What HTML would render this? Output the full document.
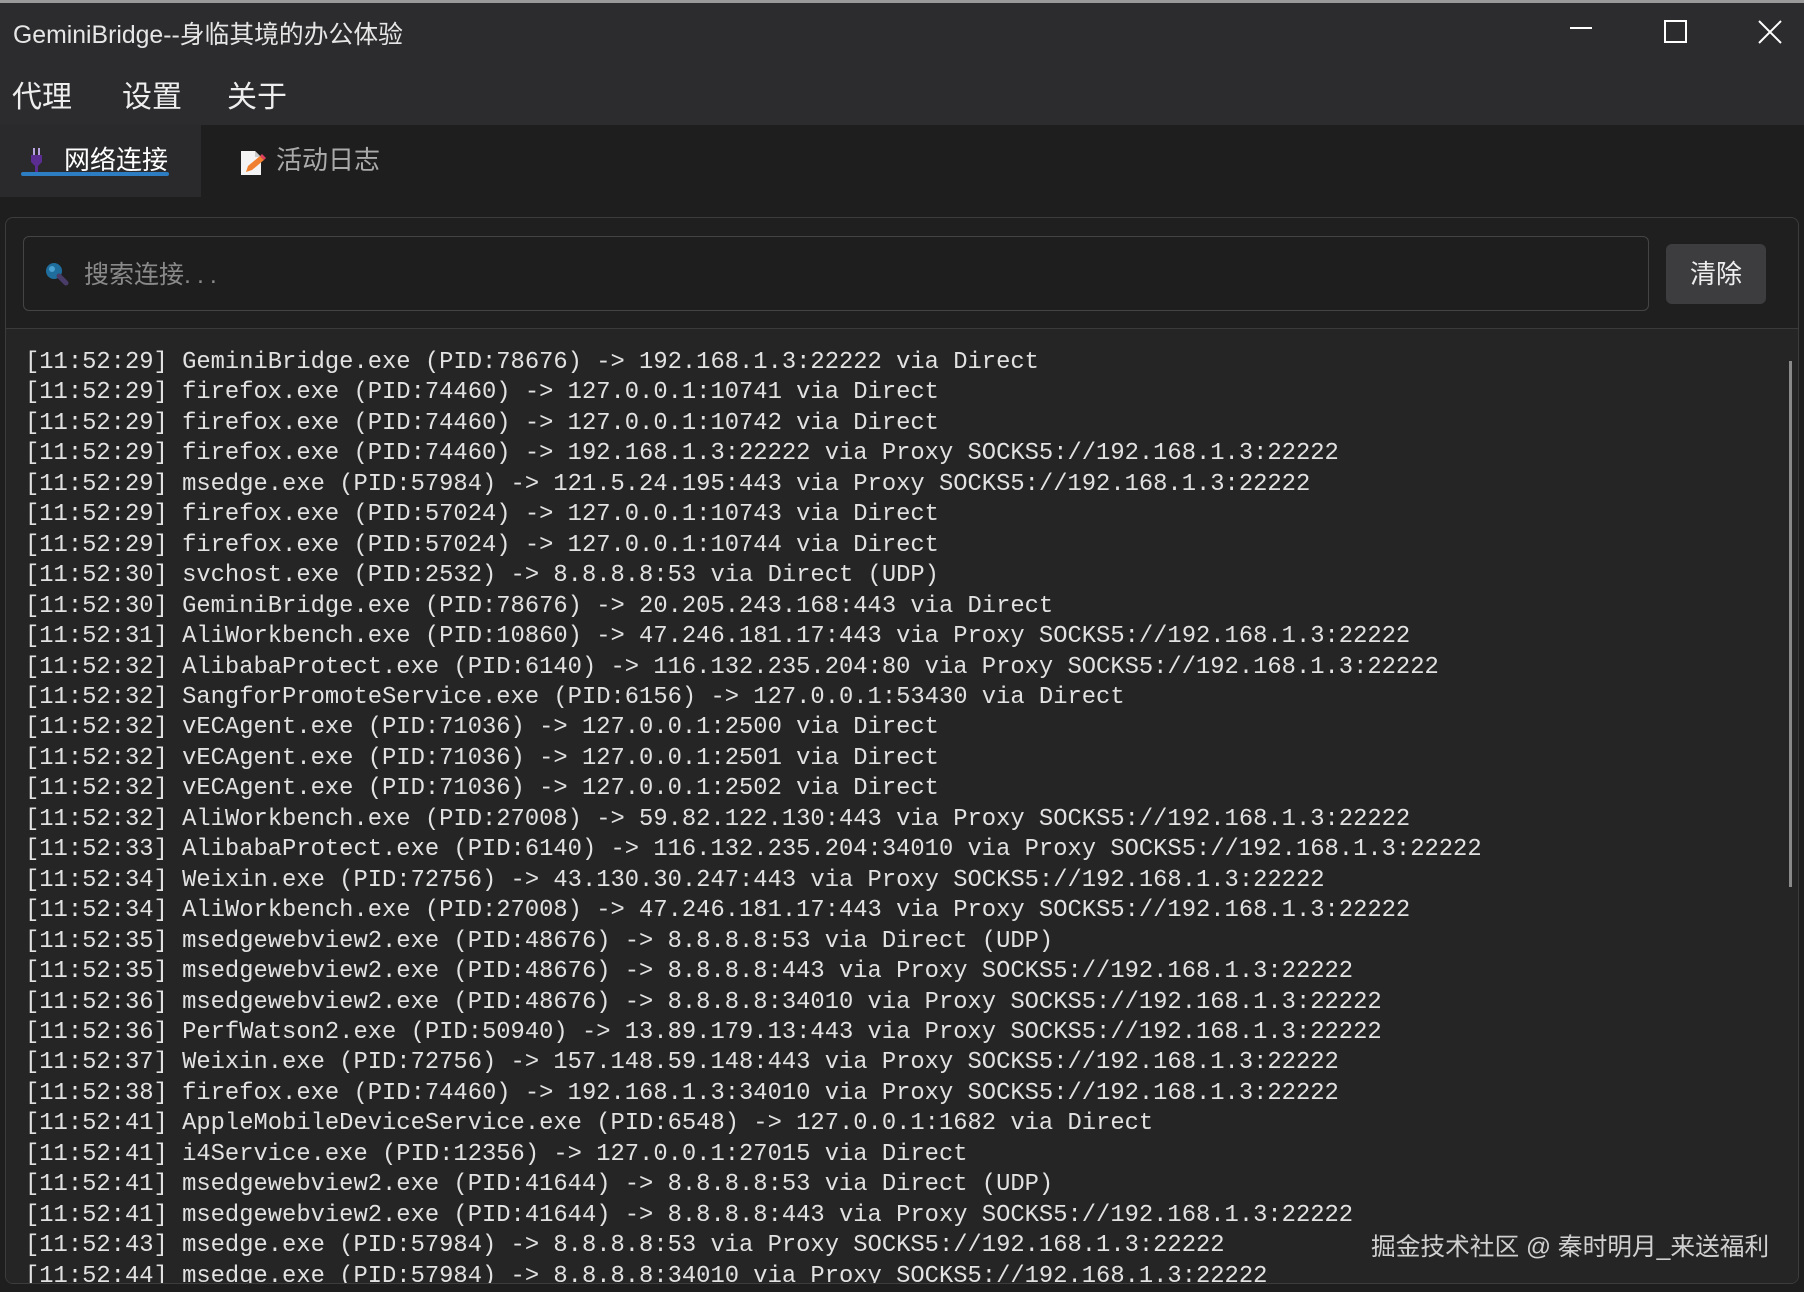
<!DOCTYPE html>
<html><head><meta charset="utf-8"><style>
*{margin:0;padding:0;box-sizing:border-box}
body{width:1804px;height:1292px;background:#1e1e1e;position:relative;overflow:hidden;font-family:"Liberation Sans","Noto Sans CJK SC",sans-serif;color:#e8e8e8}
.top{position:absolute;left:0;top:0;width:1804px;height:125px;background:#2c2c2e;border-top:3px solid #9a9a9a}
.title{position:absolute;left:13px;top:12px;font-size:24.8px;color:#e6e6e6}
.menu{position:absolute;top:69px;font-size:30px;color:#eee}
.tab1{position:absolute;left:0;top:125px;width:201px;height:72px;background:#2a2a2c}
.tabt{position:absolute;top:140px;font-size:26px}
.ul{position:absolute;left:21px;top:172px;width:148px;height:4px;background:#2d7dc2;border-radius:2px}
.panel{position:absolute;left:5px;top:217px;width:1794px;height:1067px;border:1.5px solid #3c3c3c;border-radius:8px;background:#1f1f1f;overflow:hidden}
.search{position:absolute;left:17px;top:18px;width:1626px;height:75px;border:1.5px solid #444;border-radius:6px;background:#1e1e1e}
.btn{position:absolute;left:1660px;top:26px;width:100px;height:60px;background:#3d3d40;border-radius:6px;font-size:26px;text-align:center;line-height:60px;color:#eee}
.log{position:absolute;left:0;top:110px;width:1794px;height:960px;background:#252525;border-top:1.5px solid #3a3a3a}
pre{position:absolute;left:19px;top:19px;font-family:"Liberation Mono",monospace;font-size:23.8px;line-height:30.45px;color:#e2e2e2}
.sb{position:absolute;left:1783px;top:32px;width:3px;height:526px;background:#8a8a8a}
.wm{position:absolute;left:1371px;top:1227px;font-size:24.7px;color:#d0d0d0}
</style></head><body>
<div class="top">
<div class="title">GeminiBridge--身临其境的办公体验</div>
<svg style="position:absolute;left:1570px;top:24px" width="22" height="4"><rect width="22" height="2" fill="#fff"/></svg>
<svg style="position:absolute;left:1664px;top:17px" width="24" height="24"><rect x="1" y="1" width="21" height="21" fill="none" stroke="#fff" stroke-width="2"/></svg>
<svg style="position:absolute;left:1758px;top:17px" width="24" height="24"><path d="M1 1L23 23M23 1L1 23" stroke="#fff" stroke-width="2"/></svg>
<div class="menu" style="left:12px">代理</div>
<div class="menu" style="left:122px">设置</div>
<div class="menu" style="left:227px">关于</div>
</div>
<div class="tab1"></div>
<svg style="position:absolute;left:31px;top:148px" width="12" height="26"><rect x="2" y="0" width="2" height="7" fill="#b9a2e0"/><rect x="7" y="0" width="2" height="7" fill="#b9a2e0"/><path d="M0 7H11V14L7 18V26H4V18L0 14Z" fill="#5b2d91"/></svg>
<div class="tabt" style="left:64px;color:#fff">网络连接</div>
<div class="ul"></div>
<svg style="position:absolute;left:240px;top:150px" width="26" height="26"><path d="M1 1H15L21 7V25H1Z" fill="#f4f4f4"/><path d="M15 1V7H21" fill="#ccc"/><path d="M6 22L8 16L20 6L24 10L12 20Z" fill="#f08030"/><path d="M20 6L22 4L26 8L24 10Z" fill="#e04060"/></svg>
<div class="tabt" style="left:276px;color:#aaa">活动日志</div>
<div class="panel">
<div class="search">
<svg style="position:absolute;left:20px;top:24px" width="26" height="26"><circle cx="10" cy="10" r="8" fill="#1f6d9c"/><circle cx="8" cy="8" r="3" fill="#4aa0d0"/><path d="M15 15L22 22" stroke="#4a3c68" stroke-width="5" stroke-linecap="round"/></svg>
<div style="position:absolute;left:60px;top:18px;font-size:25px;color:#8a8a8a">搜索连接<span style="letter-spacing:6px">...</span></div>
</div>
<div class="btn">清除</div>
<div class="log">
<pre>[11:52:29] GeminiBridge.exe (PID:78676) -&gt; 192.168.1.3:22222 via Direct
[11:52:29] firefox.exe (PID:74460) -&gt; 127.0.0.1:10741 via Direct
[11:52:29] firefox.exe (PID:74460) -&gt; 127.0.0.1:10742 via Direct
[11:52:29] firefox.exe (PID:74460) -&gt; 192.168.1.3:22222 via Proxy SOCKS5://192.168.1.3:22222
[11:52:29] msedge.exe (PID:57984) -&gt; 121.5.24.195:443 via Proxy SOCKS5://192.168.1.3:22222
[11:52:29] firefox.exe (PID:57024) -&gt; 127.0.0.1:10743 via Direct
[11:52:29] firefox.exe (PID:57024) -&gt; 127.0.0.1:10744 via Direct
[11:52:30] svchost.exe (PID:2532) -&gt; 8.8.8.8:53 via Direct (UDP)
[11:52:30] GeminiBridge.exe (PID:78676) -&gt; 20.205.243.168:443 via Direct
[11:52:31] AliWorkbench.exe (PID:10860) -&gt; 47.246.181.17:443 via Proxy SOCKS5://192.168.1.3:22222
[11:52:32] AlibabaProtect.exe (PID:6140) -&gt; 116.132.235.204:80 via Proxy SOCKS5://192.168.1.3:22222
[11:52:32] SangforPromoteService.exe (PID:6156) -&gt; 127.0.0.1:53430 via Direct
[11:52:32] vECAgent.exe (PID:71036) -&gt; 127.0.0.1:2500 via Direct
[11:52:32] vECAgent.exe (PID:71036) -&gt; 127.0.0.1:2501 via Direct
[11:52:32] vECAgent.exe (PID:71036) -&gt; 127.0.0.1:2502 via Direct
[11:52:32] AliWorkbench.exe (PID:27008) -&gt; 59.82.122.130:443 via Proxy SOCKS5://192.168.1.3:22222
[11:52:33] AlibabaProtect.exe (PID:6140) -&gt; 116.132.235.204:34010 via Proxy SOCKS5://192.168.1.3:22222
[11:52:34] Weixin.exe (PID:72756) -&gt; 43.130.30.247:443 via Proxy SOCKS5://192.168.1.3:22222
[11:52:34] AliWorkbench.exe (PID:27008) -&gt; 47.246.181.17:443 via Proxy SOCKS5://192.168.1.3:22222
[11:52:35] msedgewebview2.exe (PID:48676) -&gt; 8.8.8.8:53 via Direct (UDP)
[11:52:35] msedgewebview2.exe (PID:48676) -&gt; 8.8.8.8:443 via Proxy SOCKS5://192.168.1.3:22222
[11:52:36] msedgewebview2.exe (PID:48676) -&gt; 8.8.8.8:34010 via Proxy SOCKS5://192.168.1.3:22222
[11:52:36] PerfWatson2.exe (PID:50940) -&gt; 13.89.179.13:443 via Proxy SOCKS5://192.168.1.3:22222
[11:52:37] Weixin.exe (PID:72756) -&gt; 157.148.59.148:443 via Proxy SOCKS5://192.168.1.3:22222
[11:52:38] firefox.exe (PID:74460) -&gt; 192.168.1.3:34010 via Proxy SOCKS5://192.168.1.3:22222
[11:52:41] AppleMobileDeviceService.exe (PID:6548) -&gt; 127.0.0.1:1682 via Direct
[11:52:41] i4Service.exe (PID:12356) -&gt; 127.0.0.1:27015 via Direct
[11:52:41] msedgewebview2.exe (PID:41644) -&gt; 8.8.8.8:53 via Direct (UDP)
[11:52:41] msedgewebview2.exe (PID:41644) -&gt; 8.8.8.8:443 via Proxy SOCKS5://192.168.1.3:22222
[11:52:43] msedge.exe (PID:57984) -&gt; 8.8.8.8:53 via Proxy SOCKS5://192.168.1.3:22222
[11:52:44] msedge.exe (PID:57984) -&gt; 8.8.8.8:34010 via Proxy SOCKS5://192.168.1.3:22222</pre>
<div class="sb"></div>
</div>
</div>
<div class="wm">掘金技术社区 @ 秦时明月_来送福利</div>
</body></html>
